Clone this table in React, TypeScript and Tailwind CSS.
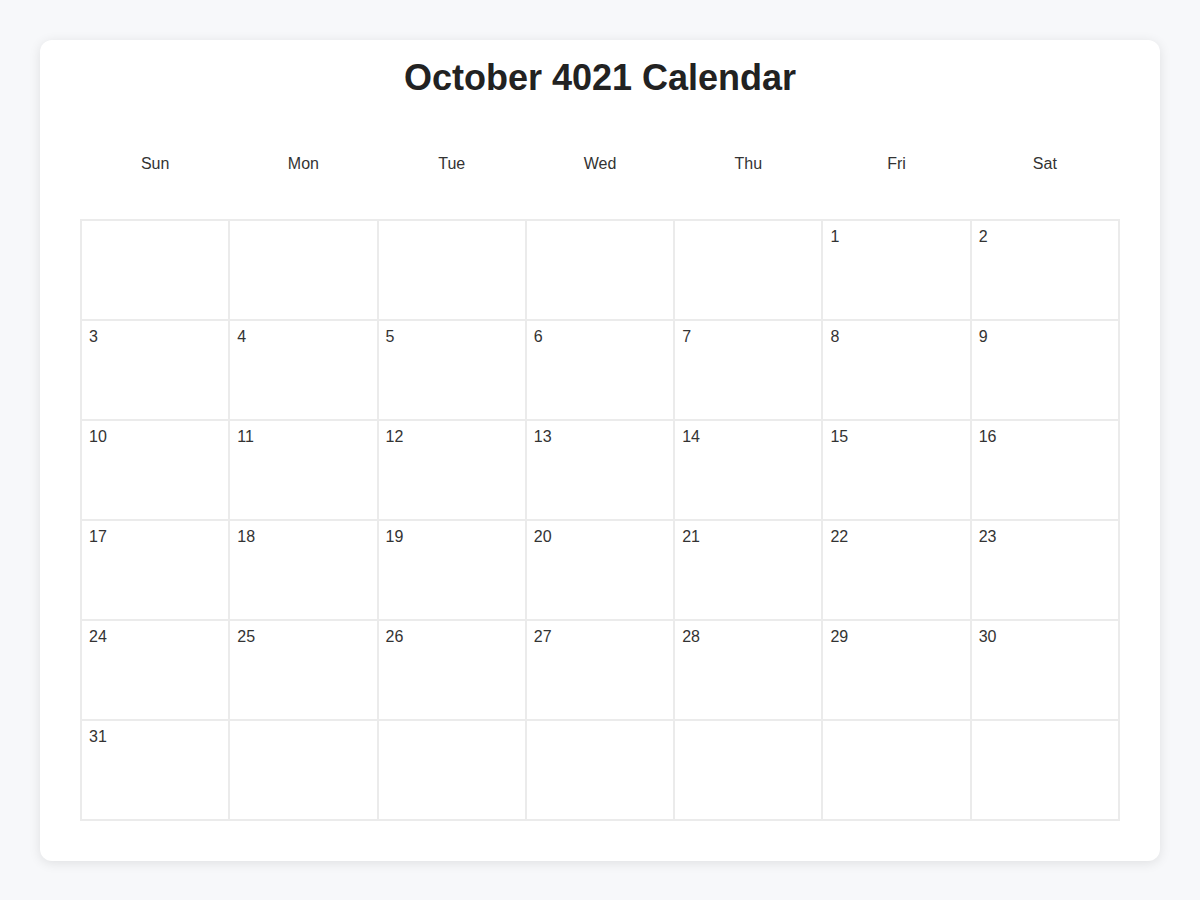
const days = ["Sun", "Mon", "Tue", "Wed", "Thu", "Fri", "Sat"];

// October 4021 starts on a Friday
const cells: (number | null)[] = [
  ...Array(5).fill(null),
  ...Array.from({ length: 31 }, (_, i) => i + 1),
];
while (cells.length < 42) cells.push(null);

const weeks = Array.from({ length: 6 }, (_, w) => cells.slice(w * 7, w * 7 + 7));

const App = () => {
  return (
    <div
      className="min-h-[900px] bg-[#f7f8fa] px-10 pt-10 text-[#333]"
      style={{ fontFamily: '"Liberation Sans", Arial, sans-serif' }}
    >
      <div className="bg-white rounded-xl shadow-[0_2px_12px_rgba(0,0,0,0.1)] px-10 pt-[18px] pb-10">
        <h1 className="text-center text-[36px] leading-[40px] font-bold text-[#222]">
          October 4021 Calendar
        </h1>

        <table className="w-full table-fixed border-collapse mt-[31px]">
          <thead>
            <tr className="h-[70px]">
              {days.map((d) => (
                <th key={d} className="font-normal text-base text-center">
                  {d}
                </th>
              ))}
            </tr>
            <tr className="h-[21px]">
              <th colSpan={7} />
            </tr>
          </thead>
          <tbody>
            {weeks.map((week, w) => (
              <tr key={w} className="h-[100px]">
                {week.map((n, i) => (
                  <td
                    key={i}
                    className="border-2 border-[#ebebeb] align-top pl-[7px] pr-2 pt-[4px] text-base"
                  >
                    {n}
                  </td>
                ))}
              </tr>
            ))}
          </tbody>
        </table>
      </div>
    </div>
  );
};

export default App;
